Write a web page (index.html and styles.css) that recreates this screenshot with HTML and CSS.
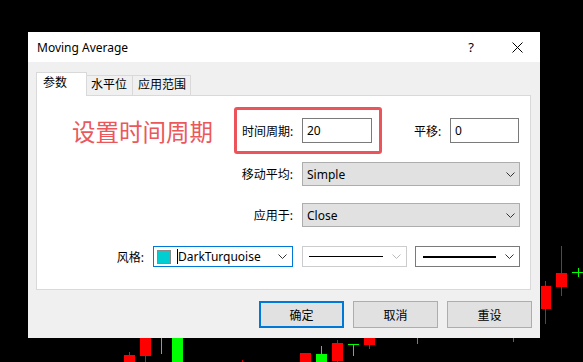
FILE: index.html
```html
<!DOCTYPE html>
<html lang="zh-CN">
<head>
<meta charset="utf-8">
<title>Moving Average</title>
<link rel="stylesheet" href="styles.css">
</head>
<body>
<svg class="chart" width="583" height="362" viewBox="0 0 583 362">
  <rect x="124" y="355" width="11" height="10" fill="#f00"/>
  <rect x="129" y="352" width="1" height="4" fill="#f00"/>
  <rect x="140" y="338" width="11" height="18" fill="#f00"/>
  <rect x="145" y="356" width="1" height="8" fill="#f00"/>
  <rect x="161" y="338" width="1" height="16" fill="#0f0"/>
  <rect x="172" y="338" width="11" height="26" fill="#0f0"/>
  <rect x="242" y="360" width="1" height="3" fill="#c00"/>
  <rect x="300" y="353" width="11" height="10" fill="#f00"/>
  <rect x="316" y="354" width="11" height="8" fill="#0f0"/>
  <rect x="321" y="346" width="1" height="8" fill="#0f0"/>
  <rect x="337" y="340" width="1" height="22" fill="#f00"/>
  <rect x="332" y="343" width="11" height="18" fill="#f00"/>
  <rect x="348" y="344" width="11" height="1" fill="#0f0"/>
  <rect x="353" y="344" width="1" height="12" fill="#0f0"/>
  <rect x="364" y="338" width="11" height="7" fill="#f00"/>
  <rect x="369" y="345" width="1" height="4" fill="#f00"/>
  <rect x="417" y="338" width="1" height="6" fill="#2b2"/>
  <rect x="513" y="338" width="1" height="4" fill="#c33"/>
  <rect x="545" y="281" width="1" height="43" fill="#f00"/>
  <rect x="541" y="286" width="10" height="23" fill="#f00"/>
  <rect x="561" y="246" width="1" height="50" fill="#f00"/>
  <rect x="556" y="273" width="11" height="14" fill="#f00"/>
  <rect x="572" y="272" width="11" height="1" fill="#0f0"/>
  <rect x="578" y="268" width="1" height="9" fill="#0f0"/>
</svg>

<div class="dialog">
  <div class="titlebar">
    <span class="title">Moving Average</span>
    <span class="tb-btn help">?</span>
    <span class="tb-btn">
      <svg width="11" height="11" viewBox="0 0 11 11"><path d="M0.5 0.5 L10.5 10.5 M10.5 0.5 L0.5 10.5" stroke="#000" stroke-width="1" fill="none"/></svg>
    </span>
  </div>

  <div class="tabs">
    <div class="tab active">参数</div>
    <div class="tab t2">水平位</div>
    <div class="tab t3">应用范围</div>
  </div>

  <div class="panel">
    <div class="row row1">
      <div class="hint">设置时间周期</div>
      <div class="redbox">
        <span class="lbl lbl-box">时间周期:</span>
        <div class="input in-period">20</div>
      </div>
      <span class="lbl lbl-shift">平移:</span>
      <div class="input in-shift">0</div>
    </div>

    <div class="row row2">
      <span class="lbl lbl-col">移动平均:</span>
      <div class="select">
        <span>Simple</span>
        <svg class="chev" width="9" height="5" viewBox="0 0 9 5"><path d="M0.5 0.5 L4.5 4.5 L8.5 0.5" stroke="#333" fill="none"/></svg>
      </div>
    </div>

    <div class="row row3">
      <span class="lbl lbl-col">应用于:</span>
      <div class="select">
        <span>Close</span>
        <svg class="chev" width="9" height="5" viewBox="0 0 9 5"><path d="M0.5 0.5 L4.5 4.5 L8.5 0.5" stroke="#333" fill="none"/></svg>
      </div>
    </div>

    <div class="row row4">
      <span class="lbl lbl-style">风格:</span>
      <div class="combo c-color">
        <span class="swatch"></span>
        <span class="caret"></span>
        <span class="ctext">DarkTurquoise</span>
        <svg class="chev" width="9" height="5" viewBox="0 0 9 5"><path d="M0.5 0.5 L4.5 4.5 L8.5 0.5" stroke="#333" fill="none"/></svg>
      </div>
      <div class="combo c-line disabled">
        <span class="line thin"></span>
        <svg class="chev" width="9" height="5" viewBox="0 0 9 5"><path d="M0.5 0.5 L4.5 4.5 L8.5 0.5" stroke="#bbb" fill="none"/></svg>
      </div>
      <div class="combo c-width">
        <span class="line thick"></span>
        <svg class="chev" width="9" height="5" viewBox="0 0 9 5"><path d="M0.5 0.5 L4.5 4.5 L8.5 0.5" stroke="#333" fill="none"/></svg>
      </div>
    </div>
  </div>

  <div class="buttons">
    <div class="btn default">确定</div>
    <div class="btn">取消</div>
    <div class="btn">重设</div>
  </div>
</div>
</body>
</html>
```

FILE: styles.css
```css
* { box-sizing: border-box; }

html, body {
  margin: 0;
  padding: 0;
}

body {
  width: 583px;
  height: 362px;
  background: #000;
  position: relative;
  overflow: hidden;
  font-family: "Noto Sans", "Noto Sans CJK SC", sans-serif;
  font-size: 12px;
  color: #000;
}

.chart {
  position: absolute;
  left: 0;
  top: 0;
}

.dialog {
  position: absolute;
  left: 28px;
  top: 32px;
  width: 512px;
  height: 306px;
  background: #f0f0f0;
  display: flex;
  flex-direction: column;
}

.titlebar {
  height: 30px;
  background: #fff;
  display: flex;
  align-items: center;
  flex: none;
}

.title {
  flex: 1;
  padding-left: 9px;
  font-size: 12px;
  color: #000;
}

.tb-btn {
  width: 46px;
  height: 30px;
  display: flex;
  align-items: center;
  justify-content: center;
}

.tb-btn.help {
  font-size: 13px;
}

.tabs {
  display: flex;
  align-items: flex-end;
  height: 24px;
  margin: 10px 0 -1px 8px;
  position: relative;
  z-index: 1;
  flex: none;
}

.tab {
  height: 20px;
  line-height: 18px;
  margin-bottom: 1px;
  border: 1px solid #d9d9d9;
  border-bottom: none;
  background: #f0f0f0;
  white-space: nowrap;
}

.tab.active {
  width: 51px;
  height: 24px;
  line-height: 20px;
  margin-bottom: 0;
  padding-left: 6px;
  background: #fff;
}

.tab.t2 {
  width: 46px;
  padding-left: 4px;
  border-left: none;
}

.tab.t3 {
  width: 58px;
  padding-left: 5px;
  border-left: none;
}

.panel {
  margin-left: 8px;
  width: 495px;
  height: 195px;
  background: #fff;
  border: 1px solid #d9d9d9;
  padding-top: 11px;
  flex: none;
}

.row {
  display: flex;
  align-items: center;
}

.row1 { height: 47px; }
.row2 { height: 24px; margin-top: 8px; }
.row3 { height: 24px; margin-top: 17px; }
.row4 { height: 21px; margin-top: 19px; }

.hint {
  width: 197px;
  padding-left: 35px;
  font-size: 23.5px;
  line-height: 30px;
  color: #ea585b;
  font-family: "Noto Sans CJK SC", sans-serif;
  white-space: nowrap;
}

.redbox {
  width: 148px;
  height: 47px;
  border: 3px solid #ea545a;
  border-radius: 3px;
  display: flex;
  align-items: center;
  padding-left: 5px;
}

.lbl {
  white-space: nowrap;
  flex: none;
}

.lbl-box {
  width: 51px;
  text-align: right;
  margin-right: 9px;
}

.lbl-shift {
  width: 28px;
  margin-left: 32px;
  margin-right: 8px;
}

.lbl-col {
  width: 256px;
  text-align: right;
  margin-right: 9px;
}

.lbl-style {
  width: 107px;
  text-align: right;
  margin-right: 9px;
}

.input {
  height: 25px;
  line-height: 23px;
  border: 1px solid #7a7a7a;
  background: #fff;
  padding-left: 4px;
}

.in-period { width: 70px; }
.in-shift { width: 69px; }

.select {
  width: 218px;
  height: 24px;
  background: #e1e1e1;
  border: 1px solid #adadad;
  display: flex;
  align-items: center;
  justify-content: space-between;
  padding: 0 4px 0 4px;
}

.chev { display: block; flex: none; }

.combo {
  height: 21px;
  display: flex;
  align-items: center;
  background: #fff;
  border: 1px solid #7a7a7a;
  flex: none;
}

.c-color {
  width: 140px;
  margin-right: 9px;
  border-color: #0078d7;
  padding: 0 5px 0 3px;
}

.swatch {
  width: 14px;
  height: 14px;
  background: #00ced1;
  border: 1px solid #8a8a8a;
  flex: none;
}

.caret {
  width: 1px;
  height: 15px;
  background: #000;
  margin-left: 6px;
  flex: none;
}

.ctext {
  flex: 1;
  line-height: 19px;
  white-space: nowrap;
  overflow: hidden;
}

.c-line {
  width: 105px;
  margin-right: 8px;
  border-color: #cccccc;
  padding: 0 5px 0 6px;
  justify-content: space-between;
}

.c-width {
  width: 105px;
  padding: 0 5px 0 7px;
  justify-content: space-between;
}

.line {
  display: block;
  background: #000;
  flex: none;
}

.line.thin { width: 74px; height: 1px; }
.line.thick { width: 73px; height: 2px; }

.buttons {
  display: flex;
  justify-content: flex-end;
  gap: 9px;
  margin-top: 11px;
  padding-right: 8px;
  flex: none;
}

.btn {
  width: 85px;
  height: 27px;
  background: #e1e1e1;
  border: 1px solid #adadad;
  display: flex;
  align-items: center;
  justify-content: center;
}

.btn.default {
  border: 2px solid #0078d7;
}
```
